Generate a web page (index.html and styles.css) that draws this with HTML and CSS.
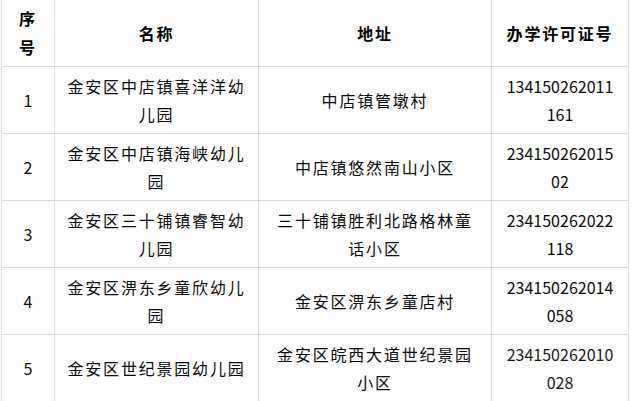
FILE: index.html
```html
<!DOCTYPE html>
<html lang="zh-CN">
<head>
<meta charset="utf-8">
<title>幼儿园办学许可证</title>
<link rel="stylesheet" href="styles.css">
</head>
<body>
<table class="list">
  <colgroup>
    <col class="c-no">
    <col class="c-name">
    <col class="c-addr">
    <col class="c-lic">
  </colgroup>
  <thead>
    <tr>
      <th>序号</th>
      <th>名称</th>
      <th>地址</th>
      <th>办学许可证号</th>
    </tr>
  </thead>
  <tbody>
    <tr>
      <td class="num">1</td>
      <td>金安区中店镇喜洋洋幼儿园</td>
      <td>中店镇管墩村</td>
      <td class="num lic">134150262011161</td>
    </tr>
    <tr>
      <td class="num">2</td>
      <td>金安区中店镇海峡幼儿园</td>
      <td>中店镇悠然南山小区</td>
      <td class="num lic">23415026201502</td>
    </tr>
    <tr>
      <td class="num">3</td>
      <td>金安区三十铺镇睿智幼儿园</td>
      <td>三十铺镇胜利北路格林童话小区</td>
      <td class="num lic">234150262022118</td>
    </tr>
    <tr>
      <td class="num">4</td>
      <td>金安区淠东乡童欣幼儿园</td>
      <td>金安区淠东乡童店村</td>
      <td class="num lic">234150262014058</td>
    </tr>
    <tr>
      <td class="num">5</td>
      <td>金安区世纪景园幼儿园</td>
      <td>金安区皖西大道世纪景园小区</td>
      <td class="num lic faded">234150262010028</td>
    </tr>
  </tbody>
</table>
</body>
</html>
```

FILE: styles.css
```css
html, body {
  margin: 0;
  padding: 0;
  background: #ffffff;
}

body {
  padding-left: 1px;
  font-family: "Noto Sans CJK SC", "Microsoft YaHei", sans-serif;
  font-size: 16px;
  color: #0a0a0a;
}

.list {
  width: 628px;
  border-collapse: collapse;
  table-layout: fixed;
  margin-top: -1px;
}

.c-no { width: 53px; }
.c-name { width: 204px; }
.c-addr { width: 233px; }
.c-lic { width: 137px; }

.list th,
.list td {
  border: 1px solid #dcdcdc;
  padding: 5px 12px;
  line-height: 28px;
  text-align: center;
  vertical-align: middle;
  letter-spacing: 1.8px;
  height: 56px;
  box-sizing: content-box;
}

.list th {
  font-weight: bold;
  color: #000000;
  line-height: 29px;
  padding: 4px 12px;
  height: 58px;
}

.list td.num {
  letter-spacing: 0;
}

.list td.lic {
  word-break: break-all;
}

.list td.faded {
  color: #1a1a1a;
}
```
